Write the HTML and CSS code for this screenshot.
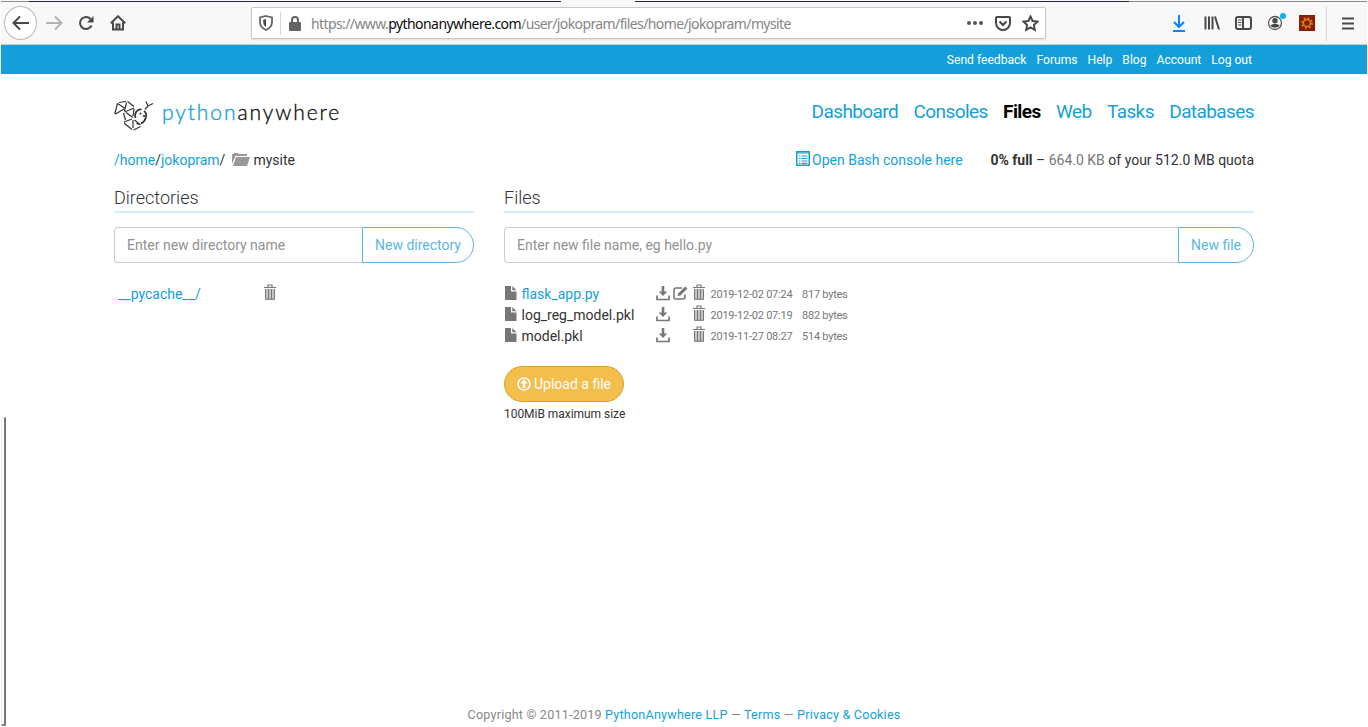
FILE: index.html
```html
<!DOCTYPE html>
<html lang="en">
<head>
<meta charset="utf-8">
<title>Files : /home/jokopram/mysite : PythonAnywhere</title>
<link rel="stylesheet" href="styles.css">
</head>
<body>
<svg class="defs" width="0" height="0">
  <symbol id="file" viewBox="0 0 12 14"><path d="M0 0h6v5.500h5.500V14H0z"/><path d="M7.300 0l4.200 4.200H7.300z"/></symbol>
  <symbol id="trash" viewBox="0 0 14 16"><path d="M1 3.500h12M5 3V1h4v2" fill="none" stroke="currentColor" stroke-width="1.200"/><path d="M2 5h10V15.500H2z" fill="#c4c4c4"/><path d="M2.500 5V15.300h9V5M5.500 5v10M8.500 5v10" fill="none" stroke="currentColor" stroke-width="1"/></symbol>
  <symbol id="download" viewBox="0 0 14 15"><path d="M5.700 0h2.600v5.500h3L7 10 2.700 5.500h3z"/><path d="M1 9.500V13.500h12V9.500" fill="none" stroke="currentColor" stroke-width="1.700"/></symbol>
</svg>
<div class="screen">
  <div class="tabstrip"><i></i></div>
  <header class="browser">
    <span class="back"><svg width="18" height="16" viewBox="0 0 18 16"><path d="M17 8H2M8 1.500L1.500 8 8 14.500"/></svg></span>
    <svg class="forward" width="18" height="16" viewBox="0 0 18 16"><path d="M1 8h15M10 1.500L16.500 8 10 14.500"/></svg>
    <svg class="reload" width="16" height="16" viewBox="0 0 16 16"><path d="M13.500 10.500A6 6 0 1 1 12.500 4"/><path d="M15.500 1v6.500H9z" class="solid"/></svg>
    <svg class="home" width="16" height="16" viewBox="0 0 16 16"><path d="M.8 8.300L8 1.300l7.200 7M3 7.500V14.500h10V7.500"/><path d="M6.500 14v-4.500h3V14"/></svg>
    <div class="address">
      <svg class="shield" width="14" height="16" viewBox="0 0 14 16"><path d="M7 1L13 2.500V7c0 4-2.500 6.500-6 8C3.500 13.500 1 11 1 7V2.500z"/><path class="solid" d="M7 4L4.200 4.800V7c0 2 .8 3.700 2.800 5z"/></svg>
      <i class="rule"></i>
      <svg class="lock" width="12" height="15" viewBox="0 0 12 15"><path d="M3 7V4a3 3 0 0 1 6 0v3" fill="none" stroke="#646464" stroke-width="2"/><rect y="6" width="12" height="9" rx="1" fill="#646464"/></svg>
      <span class="url">https://www.<b>pythonanywhere.com</b>/user/jokopram/files/home/jokopram/mysite</span>
      <svg class="dots" width="16" height="6" viewBox="0 0 16 6"><circle cx="2" cy="3" r="2"/><circle cx="8" cy="3" r="2"/><circle cx="14" cy="3" r="2"/></svg>
      <svg class="pocket" width="16" height="15" viewBox="0 0 16 15"><path d="M2 1h12a1 1 0 0 1 1 1v5a7 7 0 0 1-14 0V2a1 1 0 0 1 1-1zM4.500 5.500L8 9l3.500-3.500"/></svg>
      <svg class="star" width="17" height="17" viewBox="0 0 17 17"><path d="M8.500 1.500l2.100 4.500 4.900.6-3.600 3.400.9 4.900-4.300-2.400-4.300 2.400.9-4.900L1.500 6.600 6.400 6z"/></svg>
    </div>
    <svg class="down" width="14" height="18" viewBox="0 0 14 18"><path d="M7 1v12M2 8l5 5 5-5M1 17h12"/></svg>
    <svg class="library" width="16" height="16" viewBox="0 0 16 16"><path d="M1.500 1.500v13M5 1.500v13M8.500 1.500v13M11 1.500l4 13"/></svg>
    <svg class="sidebar" width="17" height="14" viewBox="0 0 17 14"><rect x="1" y="1" width="15" height="12" rx="2"/><path d="M8 1v12"/><path class="thin" d="M3 4h3.500M3 6.500h3.500M3 9h3.500"/></svg>
    <svg class="account" width="20" height="20" viewBox="0 0 20 20"><circle cx="8" cy="12" r="6.500" fill="none" stroke="#55585b" stroke-width="1.300"/><circle cx="8" cy="9.700" r="2.700"/><path d="M3.500 14.500c1-2 8-2 9 0-2 3-7 3-9 0z"/><circle cx="16" cy="5" r="3" fill="#00b3f4"/></svg>
    <svg class="addon" width="16" height="16" viewBox="0 0 16 16"><path d="M0 0h16v16H0z" fill="#8b1d05"/><circle cx="8" cy="8" r="3.600" fill="none" stroke="#d58b1b" stroke-width="1.500"/><circle cx="8" cy="8" r="5" fill="none" stroke="#d58b1b" stroke-width="1.700" stroke-dasharray="1.700 2.227"/></svg>
    <i class="rule long"></i>
    <svg class="menu" width="12" height="13" viewBox="0 0 12 13"><path d="M0 1.500h12M0 6.500h12M0 11.500h12"/></svg>
  </header>
  <nav class="topbar"><a>Send feedback</a><a>Forums</a><a>Help</a><a>Blog</a><a>Account</a><a>Log out</a></nav>
  <main>
    <section class="masthead">
      <div class="brand">
        <svg class="snake" width="40" height="31" viewBox="0 0 40 31"><path d="M3.500 3.500L.8 14M3.500 3.500l7 4.500M1.500 14l8.500-5M5 2.500L12 1.500M12.500 2.500L10.500 11M13.500 1.500L20 6.500M10.500 12L20 8M9.500 13L11.500 20M12 12.500l7 5M20 9l-1 7M10 22l8-3M10 23l8 6.500M19 20v8M20.500 20l6 5M19.500 30L26.500 26.500"/><path class="head" d="M21.500 18C20 13 23 9 27.500 9.500M30 11c4 3 2 10-3 12.500M25.500 24l-3-.5"/><path d="M31 9.500L34 6l-2-4.500M34 6l5-2.500"/><circle class="eye" cx="26.500" cy="13.500" r="1"/><circle class="eye" cx="30" cy="16" r="1"/></svg>
        <span class="word"><em>python</em>anywhere</span>
      </div>
      <nav class="tabs"><a>Dashboard</a><a>Consoles</a><b>Files</b><a>Web</a><a>Tasks</a><a>Databases</a></nav>
    </section>
    <section class="pathrow">
      <div class="crumb"><span><a>/home</a>/<a>jokopram</a>/</span><svg width="18" height="13" viewBox="0 0 18 13"><path d="M0 11V1h1.500L2 0h4l1 1h8v2H3.500z"/><path d="M4 4h14l-3 9H1z"/></svg><span>mysite</span></div>
      <a class="bash"><svg width="14" height="15" viewBox="0 0 14 15"><rect x=".75" y=".75" width="12.500" height="13.500" fill="none" stroke="currentColor" stroke-width="1.500"/><path d="M1 2h12M3 5h1.500M3 7.500h1.500M3 10h1.500M3 12.300h1.500M5.500 5H11.500M5.500 7.500h6M5.500 10h6M5.500 12.300h6" stroke="currentColor" stroke-width="1.200"/></svg><span>Open Bash console here</span></a>
      <span class="quota"><b>0% full</b> – <i>664.0 KB</i> of your 512.0 MB quota</span>
    </section>
    <div class="columns">
      <section class="directories">
        <h2>Directories</h2>
        <div class="group"><input placeholder="Enter new directory name"><button>New directory</button></div>
        <div class="dir"><a>__pycache__/</a><svg class="trash"><use href="#trash"/></svg></div>
      </section>
      <section class="files">
        <h2>Files</h2>
        <div class="group"><input placeholder="Enter new file name, eg hello.py"><button>New file</button></div>
        <div class="list">
          <div class="row"><svg class="file"><use href="#file"/></svg><a>flask_app.py</a><svg class="dl"><use href="#download"/></svg><svg class="edit" viewBox="0 0 15 14"><path d="M9 2H3a2 2 0 0 0-2 2v7a2 2 0 0 0 2 2h7a2 2 0 0 0 2-2V8.500" fill="none" stroke="currentColor" stroke-width="1.600"/><path d="M12.300.5l2.200 2-7 7L4.500 10l.8-2.700z"/></svg><svg class="trash"><use href="#trash"/></svg><small>2019-12-02 07:24</small><small>817 bytes</small></div>
          <div class="row"><svg class="file"><use href="#file"/></svg><span>log_reg_model.pkl</span><svg class="dl"><use href="#download"/></svg><i class="edit"></i><svg class="trash"><use href="#trash"/></svg><small>2019-12-02 07:19</small><small>882 bytes</small></div>
          <div class="row"><svg class="file"><use href="#file"/></svg><span>model.pkl</span><svg class="dl"><use href="#download"/></svg><i class="edit"></i><svg class="trash"><use href="#trash"/></svg><small>2019-11-27 08:27</small><small>514 bytes</small></div>
        </div>
        <button class="upload"><svg width="14" height="14" viewBox="0 0 14 14"><circle cx="7" cy="7" r="6" fill="none" stroke="currentColor" stroke-width="1.700"/><path d="M7 2.500l3.800 4H8.300V11H5.700V6.500H3.200z"/></svg><span>Upload a file</span></button>
        <div class="limit">100MiB maximum size</div>
      </section>
    </div>
  </main>
  <footer><span>Copyright © 2011-2019 <a>PythonAnywhere LLP</a> — <a>Terms</a> — <a>Privacy &amp; Cookies</a></span></footer>
  <i class="edge"></i>
</div>
</body>
</html>
```
FILE: styles.css
```css
*{box-sizing:border-box}
body{margin:0;background:#fff;font:14px/20px Roboto,sans-serif;color:#333}
svg{display:block;flex:none;fill:currentColor}
.defs{position:absolute}
i,em{font-style:normal}
a{color:#149fdb}
.screen{position:relative;display:flex;flex-direction:column;width:1368px;height:727px;overflow:hidden;padding:0 1px}
.tabstrip{height:2px;flex:none;padding-top:1px;background:#f9f9fa}
.tabstrip i{display:block;height:1px;background:linear-gradient(90deg,#8b918b 28px,#252638 28px 560px,#f9f9fa 560px 634px,#252638 634px 1128px,#858b86 1128px)}
.browser{display:flex;align-items:center;height:43px;flex:none;background:#f8f8f8;border-bottom:1px solid #c8cdd0;padding:0 13px 0 3px;color:#484848}
.browser>svg,.address svg{fill:none;stroke:#484848;stroke-width:2}
.browser .solid{fill:#484848;stroke:none}
.back{display:grid;place-items:center;width:34px;height:34px;border:1px solid #b9b9b9;border-radius:50%;background:#fff}
.back svg{fill:none;stroke:#484848;stroke-width:2}
.browser .forward{stroke:#b3b3b3;margin-left:8px}
.reload{margin-left:15px}
.home{margin-left:16px}
.address{display:flex;align-items:center;width:795px;height:32px;margin-left:125px;padding:0 6px 0 7px;background:#fff;border:1px solid #c8c8c8;border-radius:2px;box-shadow:0 1px 2px #ddd}
.address .shield{stroke:#646464;stroke-width:1.8}
.rule{width:1px;height:23px;margin-left:7px;background:#d7d7db}
.address .lock{stroke:none;margin-left:8px}
.url{font:14px/20px "Noto Sans",sans-serif;color:#858585;margin:2px 0 0 10px;white-space:nowrap;width:656px;letter-spacing:-.61px}
.url b{font-weight:400;color:#0c0c0d;letter-spacing:-.56px}
.address .dots{fill:#555;stroke:none}
.pocket{margin-left:12px}
.star{margin-left:11px}
.browser .down{stroke:#0a84ff;margin-left:126px}
.library{margin-left:18px}
.sidebar{margin-left:15px}
.browser .sidebar .thin{stroke-width:1}
.browser .account{fill:#484848;stroke:none;margin:-4px 0 0 15px}
.browser .addon{stroke:none;margin-left:12px}
.long{height:35px;margin-left:11px}
.menu{margin-left:15px}
.topbar{display:flex;justify-content:flex-end;gap:10px;height:29px;flex:none;background:#149fdb;padding:0 115px 0 0;font-size:12.1px;line-height:30px}
.topbar a{color:#fff}
main{padding:25px 113px 0;height:624px}
.masthead{display:flex;justify-content:space-between}
.brand{display:flex;height:36px;gap:8px;padding-top:1px}
.snake{fill:none;stroke:#333;stroke-width:1.2}
.head{stroke-width:1.7}
.eye{fill:#222;stroke:none}
.word{font:300 21px/24px Lato,sans-serif;letter-spacing:1.92px;color:#111;-webkit-text-stroke:.35px}
.word em{color:#149fdb}
.tabs{display:flex;gap:15.4px;font-size:19px;line-height:25px;letter-spacing:-.59px}
.tabs b{color:#000}
.pathrow{display:flex;height:20px;margin-top:15px}
.crumb{display:flex;width:682px}
.crumb svg{color:#999;margin:3px 3px 0 7px}
.bash{display:flex;gap:2.5px;width:195px}
.bash svg{margin-top:1px}
.quota{white-space:nowrap}
.quota i{color:#777}
.columns{display:grid;grid-template-columns:360px 750px;gap:30px;margin-top:15px}
h2{font-size:18px;line-height:26px;font-weight:300;margin:0 0 14px;height:28px;border-bottom:2px solid #d3efff}
.group{display:flex;height:36px}
.group input{flex:1;min-width:0;border:1px solid #ccc;border-right:0;border-radius:4px 0 0 4px;padding:0 12px;font:14px Roboto,sans-serif}
.group input::placeholder{color:#929292;opacity:1}
.group button{border:1px solid #5bb7e0;border-radius:0 18px 18px 0;background:#fff;color:#5bb7e0;font:14px Roboto,sans-serif;padding:0 12px}
.dir{display:flex;padding:21px 0 0 4px}
.dir a{width:145px}
.trash{width:14px;height:16px;color:#777}
.list{padding-top:20px}
.row{display:grid;grid-template-columns:17.500px 134.500px 17px 18.500px 19px 91.500px auto;height:21px;line-height:22px;white-space:nowrap}
.row svg{color:#777}
.row .file{width:12px;height:14px;margin:3px 0 0 1px}
.row .dl{width:14px;height:15px;margin-top:3px}
.row .edit{width:15px;height:14px;margin-top:3px}
.row .trash{margin-top:1px}
small{font-size:11px;line-height:23px;letter-spacing:-.24px;color:#777}
.upload{display:flex;align-items:center;gap:3px;height:36px;margin-top:20px;padding:0 12px;border:1px solid #d9a128;border-radius:18px;background:#f3be4c;color:#fff;font:14px Roboto,sans-serif}
.limit{font-size:12px;line-height:24px;letter-spacing:-.04px}
footer{text-align:center;font-size:12.6px;letter-spacing:.2px;line-height:20px;padding-top:7px;color:#888}
.edge{position:absolute;left:1px;top:417px;width:5px;height:309px;border:1px solid #eee;border-right:2px solid #777;border-bottom:2px solid #888}
```
